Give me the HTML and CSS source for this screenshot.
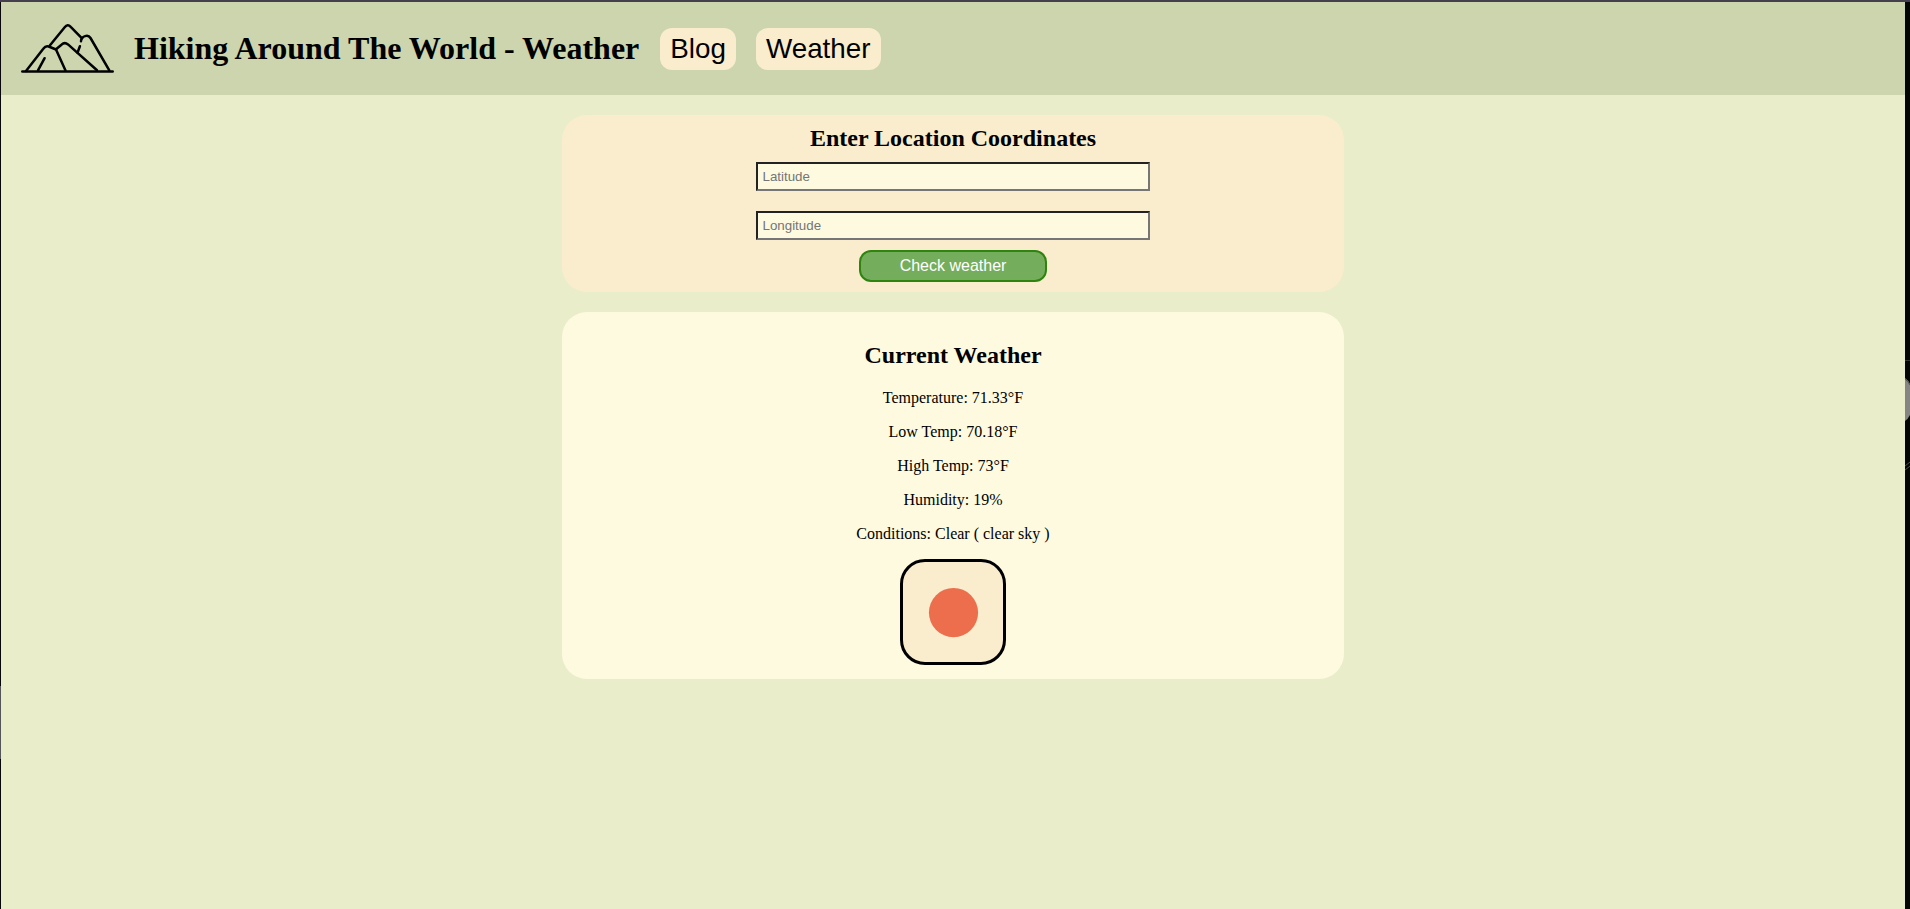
FILE: index.html
```html
<!DOCTYPE html>
<html lang="en">
<head>
<meta charset="utf-8">
<title>Hiking Around The World - Weather</title>
<link rel="stylesheet" href="styles.css">
</head>
<body>
<div class="page">
  <header class="header">
    <svg class="logo" viewBox="0 0 93 50" fill="none" stroke="#000" stroke-width="2.5" stroke-linecap="round" stroke-linejoin="round">
      <path d="M1.3 47.5H91.7"/>
      <path d="M5 46.9L22.3 24.8Q24.7 21.5 27.7 22.5L35 25.5L44.5 46.4"/>
      <path d="M29 21.3L43.7 3.3Q46.6 -.4 49.7 2.9L61 14.3"/>
      <path d="M35 25.2L40.5 20.7Q43.6 17.7 47 20.4L76 46.2"/>
      <path d="M60 17.2Q60.2 13.2 64 12.1Q67.5 10.7 69.5 14L88.3 46.4"/>
      <path d="M58.9 22.2L56.5 28.7M23.6 34.2L17 46.4"/>
    </svg>
    <h1 class="title">Hiking Around The World - Weather</h1>
    <nav class="nav">
      <a class="nav-link">Blog</a>
      <a class="nav-link">Weather</a>
    </nav>
  </header>
  <main class="content">
    <form class="card form-card">
      <h2 class="form-title">Enter Location Coordinates</h2>
      <input class="field field-first" type="text" placeholder="Latitude">
      <input class="field" type="text" placeholder="Longitude">
      <button class="submit" type="button">Check weather</button>
    </form>
    <section class="card weather-card">
      <h2>Current Weather</h2>
      <p>Temperature: 71.33°F</p>
      <p>Low Temp: 70.18°F</p>
      <p>High Temp: 73°F</p>
      <p>Humidity: 19%</p>
      <p>Conditions: Clear ( clear sky )</p>
      <svg class="condition-icon" viewBox="0 0 100 100"><circle cx="50.5" cy="50.6" r="24.6" fill="#ec6e4c"/></svg>
    </section>
  </main>
</div>
<svg class="edge" viewBox="0 0 5 909">
  <path d="M0 360.5H5" stroke="#333"/>
  <path d="M0 378Q3 380 5 384V415Q3 419 0 421Z" fill="#858585"/>
  <path d="M0 379Q3 381 5 385" stroke="#555" fill="none"/>
  <path d="M0 466L5 462M0 470L5 466" stroke="#505050"/>
</svg>
</body>
</html>
```
FILE: styles.css
```css
* { box-sizing: border-box; }

body {
  margin: 0;
  height: 909px;
  overflow: hidden;
  display: flex;
  background: #030404;
  border-top: 2px solid #463f50;
  color: #000;
  font-family: "Liberation Serif", serif;
}

/* left edge strip */
body::before {
  content: "";
  width: 1px;
  background: linear-gradient(#08080c 684px, #55555a 684px, #55555a 757px, #08080c 757px);
}

.page { width: 1904px; background: #e9edc9; }

.header {
  height: 93px;
  padding: 0 20px;
  display: flex;
  align-items: center;
  gap: 20px;
  background: #ccd5ae;
}

.logo { width: 93px; height: 50px; }

.title { margin: 0; font-size: 32px; line-height: 37px; white-space: nowrap; }

.nav { display: flex; gap: 20px; padding: 1px 0 0 1px; }

.nav-link {
  padding: 5px 10px;
  border-radius: 12px;
  background: #faedcd;
  font: 27.8px/32px "Liberation Sans", sans-serif;
}

.content {
  width: 782px;
  margin: 20px auto 0;
  display: grid;
  gap: 20px;
}

.card {
  padding: 10px;
  border-radius: 25px;
  display: flex;
  flex-direction: column;
  align-items: center;
}

.form-card { height: 177px; background: #faedcd; }

.form-title { margin: 0 0 10px; font-size: 24px; line-height: 27px; }

.field {
  width: 394px;
  height: 29px;
  padding: 1px 4.5px;
  border: 2px inset #767676;
  border-color: #222 #767676 #767676 #222;
  border-style: solid;
  background: #fefae0;
  font: 13.333px "Liberation Sans", sans-serif;
}

.field-first { margin-bottom: 20px; }

.submit {
  width: 188px;
  height: 32px;
  margin-top: 10px;
  padding: 0;
  border: 2px solid #2f830f;
  border-radius: 12px;
  background: #74ad5b;
  color: #fff;
  font: 16px "Liberation Sans", sans-serif;
}

.weather-card { height: 367px; background: #fefae0; }

.weather-card h2 { margin: 20px 0; font-size: 24px; line-height: 27px; }

.weather-card p { margin: 0 0 16px; font-size: 16px; line-height: 18px; }

.condition-icon {
  width: 106px;
  height: 106px;
  border: 3px solid #000;
  border-radius: 25px;
  background: #faedcd;
}

.edge { position: absolute; left: 1905px; top: 0; width: 5px; height: 909px; }
```
